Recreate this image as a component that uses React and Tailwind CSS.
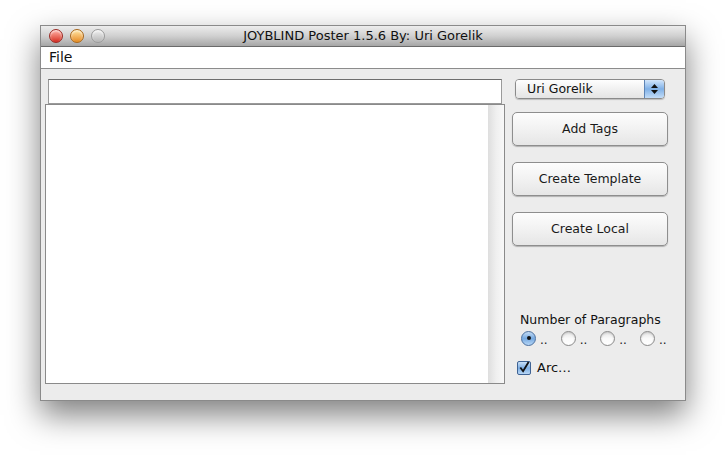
const FONT = { fontFamily: '"Lucida Grande", "DejaVu Sans", sans-serif' }

function Light({ from, to, border }) {
  return (
    <span
      className={`block w-[14px] h-[14px] rounded-full border ${border} bg-gradient-to-b ${from} ${to} shadow-[inset_0_1px_2px_rgba(255,255,255,0.8)]`}
    />
  )
}

function AquaButton({ children }) {
  return (
    <button className="h-[34px] w-[156px] rounded-[5px] border border-[#8e8e8e] bg-gradient-to-b from-[#fdfdfd] via-[#f2f2f2] to-[#e6e6e6] text-[12.5px] text-[#1a1a1a] shadow-[0_1px_1px_rgba(0,0,0,0.25)]">
      {children}
    </button>
  )
}

function Radio({ checked }) {
  return (
    <div className="flex items-center gap-[4px]">
      {checked ? (
        <span className="flex items-center justify-center w-[15px] h-[15px] rounded-full border border-[#4a6f9f] bg-gradient-to-b from-[#c4dcf5] via-[#76a9e0] to-[#b6d6f6]">
          <span className="w-[4px] h-[4px] rounded-full bg-[#111]" />
        </span>
      ) : (
        <span className="w-[15px] h-[15px] rounded-full border border-[#8a8a8a] bg-gradient-to-b from-[#e6e6e6] via-[#fafafa] to-[#ffffff] shadow-[inset_0_1px_2px_rgba(0,0,0,0.15)]" />
      )}
      <span className="text-[12px] leading-none text-[#222] mt-[3px]">..</span>
    </div>
  )
}

export default function App() {
  return (
    <div className="w-[725px] h-[455px] bg-white pl-[40px] pt-[25px]" style={FONT}>
      <div className="w-[646px] h-[376px] flex flex-col border border-[#8a8a8a] bg-[#ececec] shadow-[0_14px_30px_rgba(0,0,0,0.5)]">
        {/* title bar */}
        <div className="relative h-[21px] flex items-center bg-gradient-to-b from-[#ededed] via-[#d0d0d0] to-[#a6a6a6] border-b border-[#6a6a6a]">
          <div className="flex items-center gap-[7px] pl-[8px]">
            <Light from="from-[#ffb0a8]" to="to-[#d41f17]" border="border-[#9b2a24]" />
            <Light from="from-[#ffe6a0]" to="to-[#e58a14]" border="border-[#a8661a]" />
            <Light from="from-[#f0f0f0]" to="to-[#b5b5b5]" border="border-[#9a9a9a]" />
          </div>
          <span className="absolute inset-0 flex items-center justify-center text-[13px] text-[#111]">
            JOYBLIND Poster 1.5.6 By: Uri Gorelik
          </span>
        </div>

        {/* menu bar */}
        <div className="h-[22px] bg-white border-b border-[#8c8c8c] flex items-center pl-[8px]">
          <span className="text-[14px] text-[#111]">File</span>
        </div>

        {/* content */}
        <div className="flex flex-1 pl-[4px] pt-[10px]">
          <div className="flex flex-col w-[460px]">
            <div className="ml-[3px] w-[454px] h-[25px] bg-white border border-[#9a9a9a] border-t-[#6e6e6e]" />
            <div className="h-[280px] bg-white border border-[#8a8a8a] flex justify-end">
              <div className="w-[16px] h-full bg-gradient-to-r from-[#dedede] via-[#efefef] to-[#f8f8f8]" />
            </div>
          </div>

          <div className="flex flex-col ml-[7px] w-[156px]">
            <div className="ml-[3px] w-[150px] h-[20px] flex rounded-[4px] border border-[#8a8a8a] overflow-hidden shadow-[0_1px_1px_rgba(0,0,0,0.2)]">
              <div className="flex-1 flex items-center pl-[11px] bg-gradient-to-b from-[#fefefe] via-[#f1f1f1] to-[#e4e4e4] text-[12.5px] text-[#111]">
                Uri Gorelik
              </div>
              <div className="w-[20px] flex flex-col items-center justify-center gap-[2px] bg-gradient-to-b from-[#d3e6fb] via-[#7fb0e6] to-[#c3ddf8] border-l border-[#5d84b5]">
                <svg width="7" height="4" viewBox="0 0 7 4"><path d="M3.5 0 L7 4 L0 4 Z" fill="#111" /></svg>
                <svg width="7" height="4" viewBox="0 0 7 4"><path d="M0 0 L7 0 L3.5 4 Z" fill="#111" /></svg>
              </div>
            </div>
            <div className="flex flex-col gap-[16px] mt-[13px]">
              <AquaButton>Add Tags</AquaButton>
              <AquaButton>Create Template</AquaButton>
              <AquaButton>Create Local</AquaButton>
            </div>

            <div className="mt-[65px] pl-[8px] text-[12.5px] text-[#111]">Number of Paragraphs</div>
            <div className="flex items-center gap-[13px] pl-[9px] mt-[1px]">
              <Radio checked />
              <Radio />
              <Radio />
              <Radio />
            </div>
            <div className="flex items-center gap-[6px] pl-[5px] mt-[12px]">
              <span className="flex items-center justify-center w-[14px] h-[14px] rounded-[2px] border border-[#3f6394] bg-gradient-to-b from-[#c9e0f7] via-[#7daee3] to-[#b8d7f6]">
                <svg width="13" height="13" viewBox="0 0 13 13">
                  <path d="M2.5 6.5 L5.5 10.5 L11.5 0.5" stroke="#111" strokeWidth="2" fill="none" />
                </svg>
              </span>
              <span className="text-[13px] text-[#111]">Arc…</span>
            </div>
          </div>
        </div>
      </div>
    </div>
  )
}
